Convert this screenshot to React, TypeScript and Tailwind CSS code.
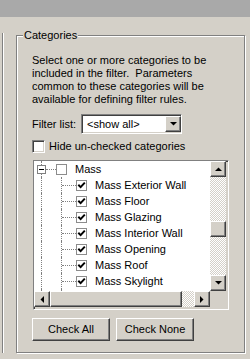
import React from 'react'

const font = "font-['Liberation_Sans',Arial,sans-serif]"
const sunken =
  'border border-t-[#808080] border-l-[#808080] border-b-white border-r-white shadow-[inset_1px_1px_0_#404040,inset_-1px_-1px_0_#d4d0c8]'
const raised =
  'border border-t-white border-l-white border-b-[#404040] border-r-[#404040] shadow-[inset_-1px_-1px_0_#808080]'
const checker = 'bg-[repeating-conic-gradient(#ffffff_0_25%,#d4d0c8_0_50%)] bg-[length:2px_2px]'

const CHILDREN = [
  'Mass Exterior Wall',
  'Mass Floor',
  'Mass Glazing',
  'Mass Interior Wall',
  'Mass Opening',
  'Mass Roof',
  'Mass Skylight',
]

function Arrow({ dir }: { dir: 'up' | 'down' | 'left' | 'right' }) {
  if (dir === 'up' || dir === 'down') {
    const pts = dir === 'up' ? '0,4 7,4 3.5,0.5' : '0,0 7,0 3.5,3.5'
    return (
      <svg width="7" height="4" viewBox="0 0 7 4">
        <polygon points={pts} fill="#000" />
      </svg>
    )
  }
  const pts = dir === 'left' ? '4,0 4,7 0.5,3.5' : '0,0 0,7 3.5,3.5'
  return (
    <svg width="4" height="7" viewBox="0 0 4 7">
      <polygon points={pts} fill="#000" />
    </svg>
  )
}

function ScrollBtn({ dir }: { dir: 'up' | 'down' | 'left' | 'right' }) {
  return (
    <div className={`w-[16px] h-[16px] shrink-0 bg-[#d4d0c8] flex items-center justify-center ${raised}`}>
      <Arrow dir={dir} />
    </div>
  )
}

function TreeCheck({ checked }: { checked: boolean }) {
  return (
    <span className="w-[11px] h-[11px] shrink-0 bg-white border border-[#8c8c8c] flex items-center justify-center">
      {checked && (
        <svg width="9" height="9" viewBox="0 0 9 9">
          <path d="M1.3 3.8 L3.6 6.1 L7.8 1.6" stroke="#000" strokeWidth="2" fill="none" />
        </svg>
      )}
    </span>
  )
}

// une colonne d'indentation : trait vertical + branche éventuelle
function Indent({ branch, minus }: { branch?: boolean; minus?: boolean }) {
  return (
    <span className="relative w-[20px] h-full shrink-0">
      <span className="absolute left-[7px] top-0 bottom-0 border-l border-dotted border-[#808080]" />
      {branch && (
        <span
          className={`absolute ${minus ? 'left-[12px]' : 'left-[8px]'} right-[-2px] top-[8px] border-t border-dotted border-[#808080]`}
        />
      )}
      {minus && (
        <span className="absolute left-[3px] top-[4px] w-[9px] h-[9px] bg-white border border-[#808080] flex items-center justify-center">
          <span className="w-[5px] h-[1px] bg-black" />
        </span>
      )}
    </span>
  )
}

function TreeView() {
  return (
    <div className={`ml-[1px] w-[196px] h-[150px] ${sunken} grid grid-cols-[176px_16px] grid-rows-[130px_16px]`}>
      <div className="bg-white overflow-hidden">
        <div className="flex items-center h-[16px]">
          <Indent branch minus />
          <span className="ml-[2px]"><TreeCheck checked={false} /></span>
          <span className="ml-[8px] whitespace-nowrap leading-[16px]">Mass</span>
        </div>
        {CHILDREN.map(c => (
          <div key={c} className="flex items-center h-[16px]">
            <Indent />
            <Indent branch />
            <span className="ml-[2px]"><TreeCheck checked /></span>
            <span className="ml-[8px] whitespace-nowrap leading-[16px]">{c}</span>
          </div>
        ))}
        {/* ligne suivante, à peine visible */}
        <div className="flex items-start h-[16px]">
          <Indent />
          <Indent />
          <span className="ml-[2px] mt-[2px]"><TreeCheck checked /></span>
        </div>
      </div>

      {/* barre verticale */}
      <div className={`flex flex-col ${checker}`}>
        <ScrollBtn dir="up" />
        <div className="h-[44px]" />
        <div className={`h-[16px] bg-[#d4d0c8] ${raised}`} />
        <div className="flex-1" />
        <ScrollBtn dir="down" />
      </div>

      {/* barre horizontale */}
      <div className={`flex ${checker}`}>
        <ScrollBtn dir="left" />
        <div className={`w-[132px] h-[16px] bg-[#d4d0c8] ${raised}`} />
        <div className="flex-1" />
        <ScrollBtn dir="right" />
      </div>
      <div className="bg-[#d4d0c8]" />
    </div>
  )
}

export default function App() {
  return (
    <div className={`w-[250px] h-[359px] bg-[#d4d0c8] text-[11px] text-black overflow-hidden ${font}`}>
      <div className="h-[17px] bg-[#a9a9a9]" />

      <div className="flex items-start">
        <div className="mt-[16px] w-[3px] h-[320px] border-r border-[#808080] shadow-[1px_0_0_#fff]" />

        <fieldset className="ml-[13px] mt-[12px] w-[229px] h-[324px] border border-[#808080] shadow-[1px_1px_0_#fff,inset_1px_1px_0_#fff] pl-[15px]">
          <legend className="-ml-[9px] px-[1px] bg-[#d4d0c8] leading-[13px]">Categories</legend>

          <p className="mt-[12px] leading-[13px] whitespace-pre">
            {'Select one or more categories to be\nincluded in the filter.  Parameters\ncommon to these categories will be\navailable for defining filter rules.'}
          </p>

          <div className="mt-[8px] flex items-center h-[20px]">
            <span>Filter list:</span>
            <div className={`ml-[5px] w-[101px] h-[20px] bg-white ${sunken} flex items-center`}>
              <span className="ml-[5px] flex-1 leading-[16px]">&lt;show all&gt;</span>
              <ScrollBtn dir="down" />
            </div>
          </div>

          <div className="mt-[6px] flex items-center h-[13px]">
            <span className={`w-[13px] h-[13px] bg-white ${sunken}`} />
            <span className="ml-[4px] leading-[13px]">Hide un-checked categories</span>
          </div>

          <div className="mt-[7px]">
            <TreeView />
          </div>

          <div className="mt-[8px] flex gap-[6px]">
            <button className={`w-[78px] h-[23px] bg-[#d4d0c8] ${raised}`}>Check All</button>
            <button className={`w-[78px] h-[23px] bg-[#d4d0c8] ${raised}`}>Check None</button>
          </div>
        </fieldset>
      </div>
    </div>
  )
}
